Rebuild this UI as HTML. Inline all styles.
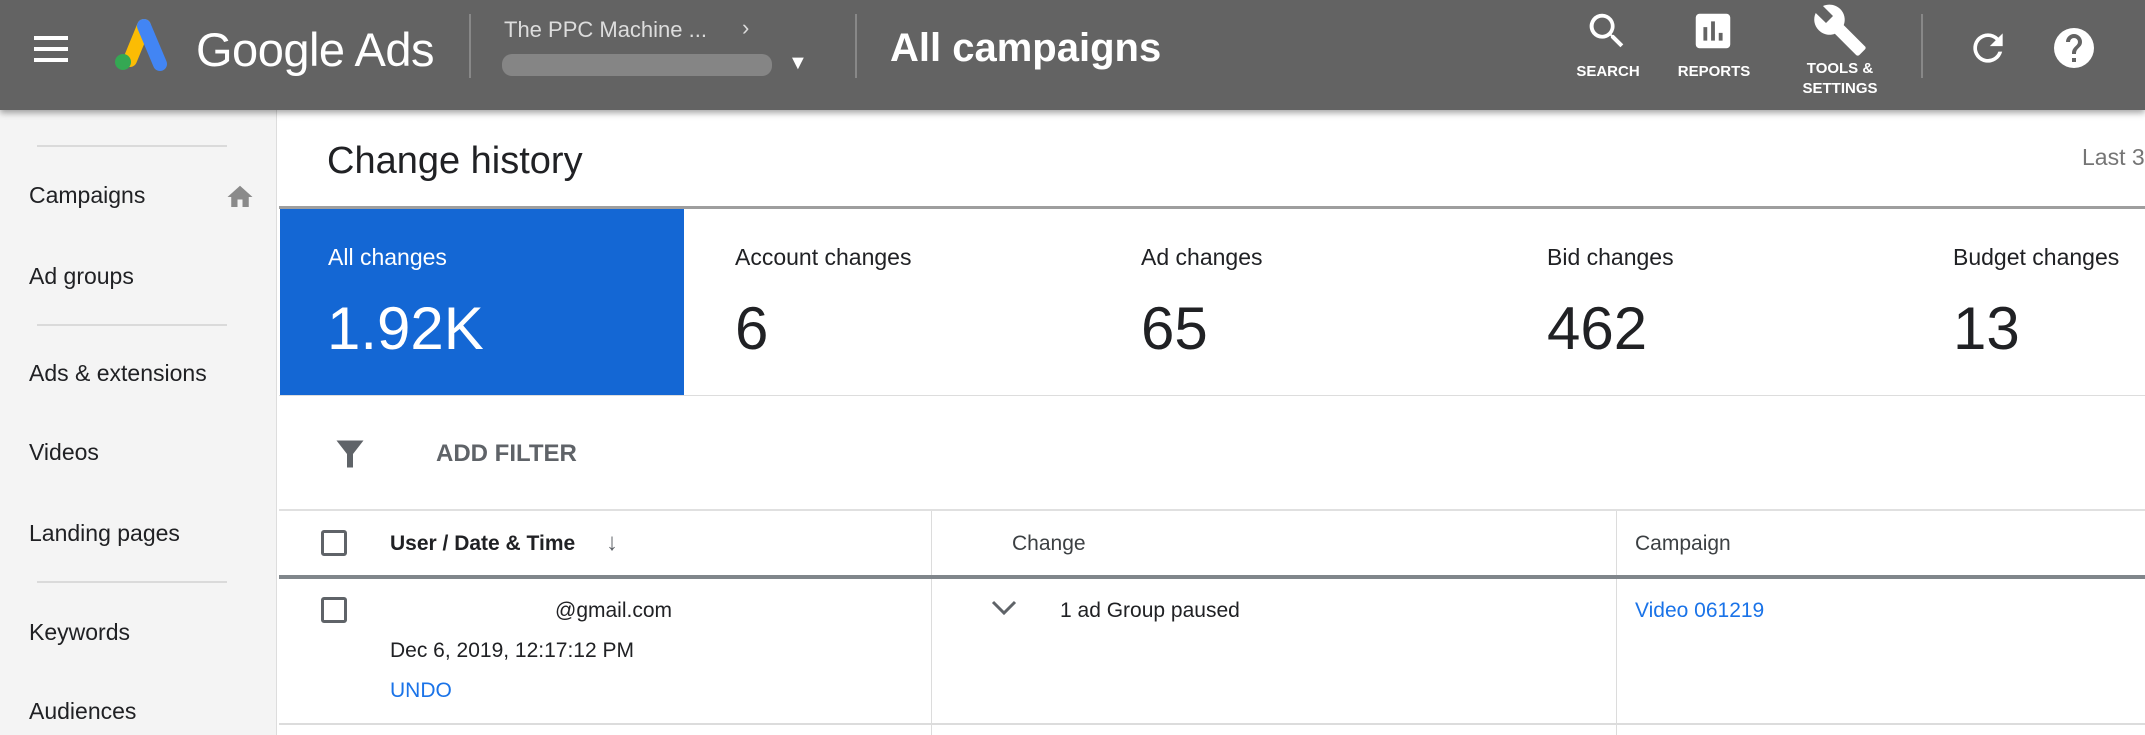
<!DOCTYPE html>
<html><head><meta charset="utf-8"><style>
*{margin:0;padding:0;box-sizing:border-box}
body{width:2145px;height:735px;overflow:hidden;background:#fff;font-family:"Liberation Sans",Arial,sans-serif;position:relative;color:#202124}
.a{position:absolute;white-space:nowrap}
#hdr{position:absolute;left:0;top:0;width:2145px;height:110px;background:#636363;box-shadow:0 3px 6px rgba(0,0,0,.35);z-index:2}
.w{color:#fff}
.lbl{font-size:15px;font-weight:bold;color:#fff;text-align:center;line-height:20px}
#side{position:absolute;left:0;top:110px;width:277px;height:625px;background:#f4f4f4;border-right:1px solid #ddd}
.si{position:absolute;left:29px;font-size:23px;color:#202124;white-space:nowrap}
.dv{position:absolute;left:37px;width:190px;height:2px;background:#dadada}
.st{position:absolute;top:209px;height:186px}
.st .l{position:absolute;top:35px;font-size:23px;color:#202124;white-space:nowrap}
.st .n{position:absolute;top:85px;font-size:60px;color:#202124;white-space:nowrap}
.td{font-size:21px;color:#202124}
</style></head><body>
<div id="hdr">
 <div class="a" style="left:34px;top:36px;width:34px;height:4px;background:#fff"></div>
 <div class="a" style="left:34px;top:47px;width:34px;height:4px;background:#fff"></div>
 <div class="a" style="left:34px;top:58px;width:34px;height:4px;background:#fff"></div>
 <svg class="a" style="left:108px;top:16px" width="62" height="58" viewBox="0 0 62 58">
  <line x1="22" y1="44" x2="36" y2="10" stroke="#fbbc04" stroke-width="14" stroke-linecap="round"/>
  <line x1="36" y1="10" x2="52" y2="48" stroke="#4285f4" stroke-width="14" stroke-linecap="round"/>
  <circle cx="15" cy="46" r="8" fill="#34a853"/>
 </svg>
 <div class="a w" style="left:196px;top:22px;font-size:47px;letter-spacing:-0.5px">Google Ads</div>
 <div class="a" style="left:469px;top:14px;width:2px;height:64px;background:#888"></div>
 <div class="a" style="left:504px;top:17px;font-size:22px;color:#ddd">The PPC Machine ...</div>
 <div class="a" style="left:742px;top:15px;font-size:22px;color:#ddd">›</div>
 <div class="a" style="left:502px;top:54px;width:270px;height:22px;background:#858585;border-radius:10px"></div>
 <div class="a" style="left:788px;top:52px;font-size:20px;color:#fff">▼</div>
 <div class="a" style="left:855px;top:14px;width:2px;height:64px;background:#888"></div>
 <div class="a w" style="left:890px;top:26px;font-size:40px;font-weight:bold">All campaigns</div>
 <svg class="a" style="left:1584px;top:8px" width="46" height="46" viewBox="0 0 24 24"><path fill="#fff" d="M15.5 14h-.8l-.3-.3A6.5 6.5 0 1 0 9.5 16a6.5 6.5 0 0 0 4.2-1.6l.3.3v.8l5 5 1.5-1.5-5-5zm-6 0A4.5 4.5 0 1 1 14 9.5 4.5 4.5 0 0 1 9.5 14z"/></svg>
 <div class="a lbl" style="left:1572px;top:62px;width:72px">SEARCH</div>
 <svg class="a" style="left:1690px;top:8px" width="46" height="46" viewBox="0 0 24 24"><path fill="#fff" d="M19 3H5a2 2 0 0 0-2 2v14a2 2 0 0 0 2 2h14a2 2 0 0 0 2-2V5a2 2 0 0 0-2-2zM9 17H7v-7h2v7zm4 0h-2V7h2v10zm4 0h-2v-4h2v4z"/></svg>
 <div class="a lbl" style="left:1674px;top:62px;width:80px">REPORTS</div>
 <svg class="a" style="left:1812px;top:2px" width="56" height="56" viewBox="0 0 24 24"><path fill="#fff" d="M22.7 19l-9.1-9.1c.9-2.3.4-5-1.5-6.9-2-2-5-2.4-7.4-1.3L9 6 6 9 1.6 4.7C.4 7.1.9 10.1 2.9 12.1c1.9 1.9 4.6 2.4 6.9 1.5l9.1 9.1c.4.4 1 .4 1.4 0l2.3-2.3c.5-.4.5-1.1.1-1.4z"/></svg>
 <div class="a lbl" style="left:1790px;top:59px;width:100px">TOOLS &amp;<br>SETTINGS</div>
 <div class="a" style="left:1921px;top:14px;width:2px;height:64px;background:#888"></div>
 <svg class="a" style="left:1966px;top:26px" width="44" height="44" viewBox="0 0 24 24"><path fill="#fff" d="M17.65 6.35A7.96 7.96 0 0 0 12 4a8 8 0 1 0 7.73 10h-2.08A6 6 0 1 1 12 6c1.66 0 3.14.69 4.22 1.78L13 11h7V4l-2.35 2.35z"/></svg>
 <svg class="a" style="left:2050px;top:24px" width="48" height="48" viewBox="0 0 24 24"><path fill="#fff" d="M12 2a10 10 0 1 0 0 20 10 10 0 0 0 0-20zm1 17h-2v-2h2v2zm2.07-7.75l-.9.92C13.45 12.9 13 13.5 13 15h-2v-.5c0-1.1.45-2.1 1.170-2.83l1.24-1.26A2 2 0 0 0 14 9a2 2 0 1 0-4 0H8a4 4 0 1 1 8 0c0 .88-.36 1.68-.93 2.25z"/></svg>
</div>
<div id="side">
 <div class="dv" style="top:35px"></div>
 <div class="si" style="top:72px">Campaigns</div>
 <svg class="a" style="left:224px;top:72px" width="32" height="30" viewBox="0 0 24 24"><path fill="#8a8a8a" d="M10 20v-6h4v6h5v-8h3L12 3 2 12h3v8z"/></svg>
 <div class="si" style="top:153px">Ad groups</div>
 <div class="dv" style="top:214px"></div>
 <div class="si" style="top:250px">Ads &amp; extensions</div>
 <div class="si" style="top:329px">Videos</div>
 <div class="si" style="top:410px">Landing pages</div>
 <div class="dv" style="top:471px"></div>
 <div class="si" style="top:509px">Keywords</div>
 <div class="si" style="top:588px">Audiences</div>
</div>
<div class="a" style="left:327px;top:140px;font-size:38px;font-weight:500;color:#202124">Change history</div>
<div class="a" style="left:2082px;top:144px;font-size:23px;color:#757575">Last 3</div>
<div class="a" style="left:279px;top:206px;width:1866px;height:3px;background:#9e9e9e"></div>
<div class="st" style="left:280px;width:404px;background:#1467d4"><div class="l" style="left:48px;color:#fff">All changes</div><div class="n" style="left:47px;color:#fff">1.92K</div></div>
<div class="st" style="left:735px"><div class="l">Account changes</div><div class="n">6</div></div>
<div class="st" style="left:1141px"><div class="l">Ad changes</div><div class="n">65</div></div>
<div class="st" style="left:1547px"><div class="l">Bid changes</div><div class="n">462</div></div>
<div class="st" style="left:1953px"><div class="l">Budget changes</div><div class="n">13</div></div>
<div class="a" style="left:279px;top:395px;width:1866px;height:1px;background:#ddd"></div>
<svg class="a" style="left:332px;top:436px" width="36" height="36" viewBox="0 0 24 24"><path fill="#5f6368" d="M3 3h18l-7 9v9h-4v-9z"/></svg>
<div class="a" style="left:436px;top:440px;font-size:24px;font-weight:bold;color:#5f6368">ADD FILTER</div>
<div class="a" style="left:279px;top:509px;width:1866px;height:2px;background:#e0e0e0"></div>
<div class="a" style="left:931px;top:511px;width:1px;height:224px;background:#dcdcdc"></div>
<div class="a" style="left:1616px;top:511px;width:1px;height:224px;background:#dcdcdc"></div>
<div class="a" style="left:321px;top:530px;width:26px;height:26px;border:3px solid #5f6368;border-radius:3px"></div>
<div class="a td" style="left:390px;top:532px;font-weight:bold">User / Date &amp; Time</div>
<div class="a" style="left:606px;top:529px;font-size:24px;color:#5f6368">↓</div>
<div class="a td" style="left:1012px;top:532px;color:#3c4043">Change</div>
<div class="a td" style="left:1635px;top:532px;color:#3c4043">Campaign</div>
<div class="a" style="left:279px;top:575px;width:1866px;height:4px;background:#80868b"></div>
<div class="a" style="left:321px;top:597px;width:26px;height:26px;border:3px solid #5f6368;border-radius:3px"></div>
<div class="a td" style="left:555px;top:599px">@gmail.com</div>
<div class="a td" style="left:390px;top:639px">Dec 6, 2019, 12:17:12 PM</div>
<div class="a td" style="left:390px;top:679px;color:#1a73e8">UNDO</div>
<svg class="a" style="left:990px;top:598px" width="28" height="20" viewBox="0 0 28 20"><path d="M3 4l11 11L25 4" stroke="#5f6368" stroke-width="3" fill="none"/></svg>
<div class="a td" style="left:1060px;top:599px">1 ad Group paused</div>
<div class="a td" style="left:1635px;top:599px;color:#1a73e8">Video 061219</div>
<div class="a" style="left:279px;top:723px;width:1866px;height:2px;background:#dcdcdc"></div>
</body></html>
